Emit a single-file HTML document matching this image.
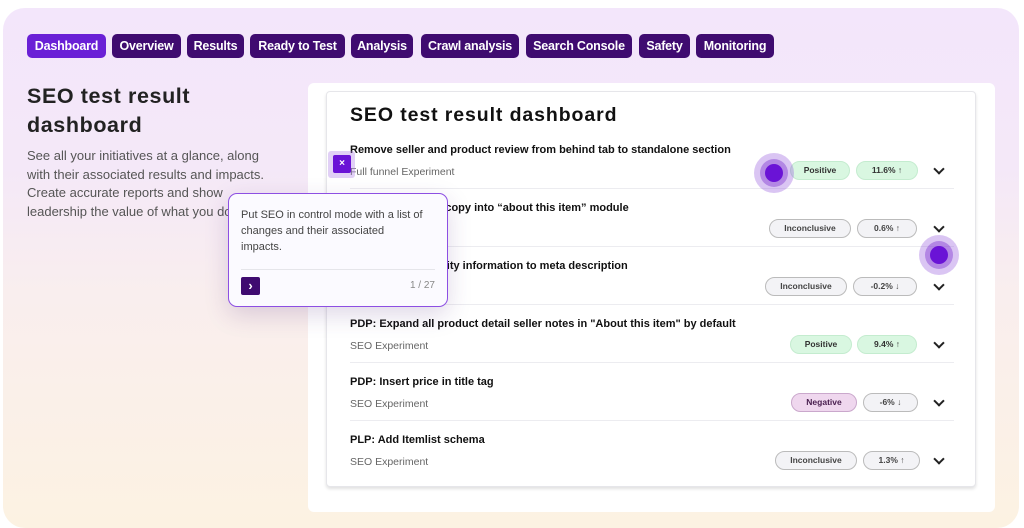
<!DOCTYPE html>
<html><head><meta charset="utf-8"><style>
*{margin:0;padding:0;box-sizing:border-box}
body{width:1024px;height:518px;background:#fff;font-family:"Liberation Sans",sans-serif;position:relative;overflow:hidden}
.outer{position:absolute;left:3px;top:8px;width:1016px;height:520px;border-radius:22px;background:linear-gradient(180deg,#f3e6fb 0%,#f4e8f8 30%,#f9eeee 55%,#fcf2e2 100%)}
.tab{position:absolute;top:34px;height:24px;border-radius:5px;background:#3f0b70;color:#fff;font-weight:bold;font-size:12.5px;line-height:24px;text-align:center;letter-spacing:-0.2px}
.tab.a{background:#6a20d6}
h1{position:absolute;left:27px;top:82px;font-size:21.5px;line-height:29px;color:#222;font-weight:900;letter-spacing:0.6px}
.desc{position:absolute;left:27px;top:147px;width:300px;font-size:13px;line-height:18.5px;color:#555;white-space:nowrap}
.white{position:absolute;left:308px;top:83px;width:687px;height:429px;background:#fff;border-radius:6px}
.card{position:absolute;left:326px;top:91px;width:650px;height:396px;background:#fff;border:1px solid #e6e6ea;border-radius:4px;box-shadow:0 2px 3px rgba(0,0,0,.12)}
.card h2{position:absolute;left:23px;top:12px;font-size:19.5px;font-weight:900;color:#111;letter-spacing:0.9px}
.row{position:absolute;left:23px;width:604px;height:58px;border-bottom:1px solid #ececf0}
.t{position:absolute;left:0;top:13px;font-size:11px;font-weight:bold;color:#111;white-space:nowrap}
.s{position:absolute;left:0;top:35px;font-size:10.5px;color:#666}
.b{position:absolute;top:30px;height:19px;border-radius:10px;font-size:8.5px;font-weight:bold;line-height:17px;text-align:center;color:#444;border:1px solid #bbb;background:#f3f3f6}
.b.g{background:#d9f7e1;border-color:#c4eccf;color:#333}
.b.n{background:#efd7ee;border-color:#caa8cc;color:#4a2050}
.chev{position:absolute;left:585px;top:34px;width:8px;height:8px;border-right:2px solid #222;border-bottom:2px solid #222;transform:rotate(45deg)}
.tip{position:absolute;left:228px;top:193px;width:220px;height:114px;background:#fbfaff;border:1.5px solid #8d4fe3;border-radius:9px;box-shadow:0 8px 24px rgba(80,40,120,.18)}
.tip p{position:absolute;left:12px;top:13px;width:205px;font-size:11px;line-height:16px;color:#444;white-space:nowrap}
.tip .hr{position:absolute;left:12px;right:12px;top:75px;border-top:1px solid #e5e5ea}
.tip .nx{position:absolute;left:12px;top:83px;width:19px;height:18px;background:#3f0b70;border-radius:2px;color:#fff;font-size:13px;line-height:18px;text-align:center;font-weight:bold}
.tip .pg{position:absolute;right:12px;top:86px;font-size:10px;color:#888}
.dot{position:absolute;width:40px;height:40px;border-radius:50%;background:rgba(150,90,220,.35)}
.dot::before{content:"";position:absolute;left:6px;top:6px;width:28px;height:28px;border-radius:50%;background:rgba(130,60,210,.45)}
.dot::after{content:"";position:absolute;left:11px;top:11px;width:18px;height:18px;border-radius:50%;background:#6a13d6}
</style></head><body>
<div class="outer"></div>
<div class="tab a" style="left:27px;width:79px">Dashboard</div>
<div class="tab" style="left:112px;width:69px">Overview</div>
<div class="tab" style="left:187px;width:57px">Results</div>
<div class="tab" style="left:250px;width:95px">Ready to Test</div>
<div class="tab" style="left:351px;width:62px">Analysis</div>
<div class="tab" style="left:421px;width:98px">Crawl analysis</div>
<div class="tab" style="left:526px;width:106px">Search Console</div>
<div class="tab" style="left:639px;width:51px">Safety</div>
<div class="tab" style="left:696px;width:78px">Monitoring</div>
<h1>SEO test result<br>dashboard</h1>
<div class="desc">See all your initiatives at a glance, along<br>with their associated results and impacts.<br>Create accurate reports and show<br>leadership the value of what you do.</div>
<div class="white"></div>
<div class="card">
<h2>SEO test result dashboard</h2>
<div class="row" style="top:39px"><div class="t">Remove seller and product review from behind tab to standalone section</div><div class="s">Full funnel Experiment</div><div class="b g" style="left:440px;width:60px">Positive</div><div class="b g" style="left:506px;width:62px">11.6% ↑</div><div class="chev"></div></div>
<div class="row" style="top:97px"><div class="t">PDP: Update date copy into “about this item” module</div><div class="s">SEO Experiment</div><div class="b" style="left:419px;width:82px">Inconclusive</div><div class="b" style="left:507px;width:60px">0.6% ↑</div><div class="chev"></div></div>
<div class="row" style="top:155px"><div class="t">PDP: Add availability information to meta description</div><div class="s">SEO Experiment</div><div class="b" style="left:415px;width:82px">Inconclusive</div><div class="b" style="left:503px;width:64px">-0.2% ↓</div><div class="chev"></div></div>
<div class="row" style="top:213px"><div class="t">PDP: Expand all product detail seller notes in "About this item" by default</div><div class="s">SEO Experiment</div><div class="b g" style="left:440px;width:62px">Positive</div><div class="b g" style="left:507px;width:60px">9.4% ↑</div><div class="chev"></div></div>
<div class="row" style="top:271px"><div class="t">PDP: Insert price in title tag</div><div class="s">SEO Experiment</div><div class="b n" style="left:441px;width:66px">Negative</div><div class="b" style="left:513px;width:55px">-6% ↓</div><div class="chev"></div></div>
<div class="row" style="top:329px;border-bottom:none"><div class="t">PLP: Add Itemlist schema</div><div class="s">SEO Experiment</div><div class="b" style="left:425px;width:82px">Inconclusive</div><div class="b" style="left:513px;width:57px">1.3% ↑</div><div class="chev"></div></div>
</div>
<div style="position:absolute;left:328px;top:151px;width:27px;height:27px;background:rgba(170,120,230,.35);border-radius:3px"></div>
<div style="position:absolute;left:333px;top:155px;width:18px;height:18px;background:#6a13d6;border-radius:2px;color:#fff;font-size:10px;line-height:18px;text-align:center;font-weight:bold">×</div>
<div class="dot" style="left:754px;top:153px"></div>
<div class="dot" style="left:919px;top:235px"></div>
<div class="tip"><p>Put SEO in control mode with a list of<br>changes and their associated<br>impacts.</p><div class="hr"></div><div class="nx">›</div><div class="pg">1 / 27</div></div>
</body></html>
